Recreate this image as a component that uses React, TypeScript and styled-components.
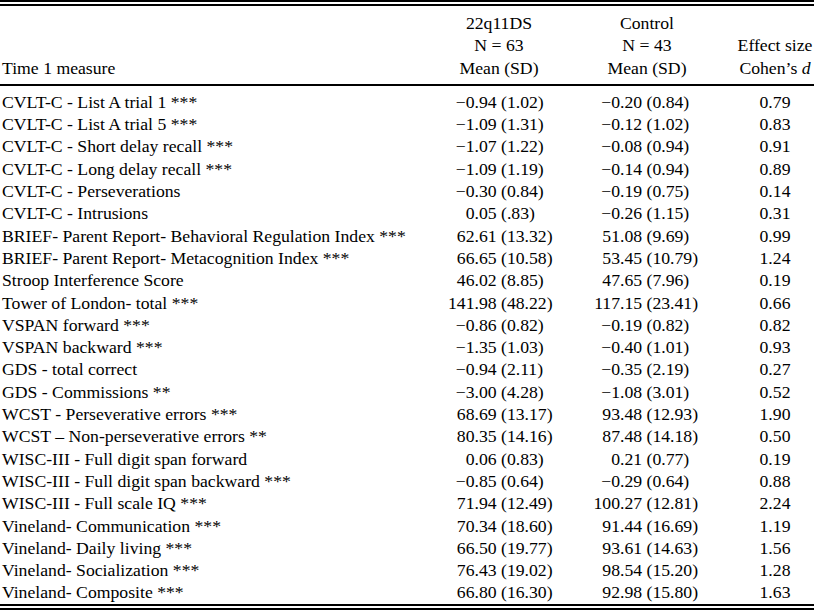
import React from 'react';
import styled, { createGlobalStyle } from 'styled-components';

type Row = {
  label: string;
  patient: string;
  control: string;
  effect: string;
};

const rows: Row[] = [
  { label: 'CVLT-C - List A trial 1 ***', patient: '−0.94 (1.02)', control: '−0.20 (0.84)', effect: '0.79' },
  { label: 'CVLT-C - List A trial 5 ***', patient: '−1.09 (1.31)', control: '−0.12 (1.02)', effect: '0.83' },
  { label: 'CVLT-C - Short delay recall ***', patient: '−1.07 (1.22)', control: '−0.08 (0.94)', effect: '0.91' },
  { label: 'CVLT-C - Long delay recall ***', patient: '−1.09 (1.19)', control: '−0.14 (0.94)', effect: '0.89' },
  { label: 'CVLT-C - Perseverations', patient: '−0.30 (0.84)', control: '−0.19 (0.75)', effect: '0.14' },
  { label: 'CVLT-C - Intrusions', patient: '0.05 (.83)', control: '−0.26 (1.15)', effect: '0.31' },
  { label: 'BRIEF- Parent Report- Behavioral Regulation Index ***', patient: '62.61 (13.32)', control: '51.08 (9.69)', effect: '0.99' },
  { label: 'BRIEF- Parent Report- Metacognition Index ***', patient: '66.65 (10.58)', control: '53.45 (10.79)', effect: '1.24' },
  { label: 'Stroop Interference Score', patient: '46.02 (8.85)', control: '47.65 (7.96)', effect: '0.19' },
  { label: 'Tower of London- total ***', patient: '141.98 (48.22)', control: '117.15 (23.41)', effect: '0.66' },
  { label: 'VSPAN forward ***', patient: '−0.86 (0.82)', control: '−0.19 (0.82)', effect: '0.82' },
  { label: 'VSPAN backward ***', patient: '−1.35 (1.03)', control: '−0.40 (1.01)', effect: '0.93' },
  { label: 'GDS - total correct', patient: '−0.94 (2.11)', control: '−0.35 (2.19)', effect: '0.27' },
  { label: 'GDS - Commissions **', patient: '−3.00 (4.28)', control: '−1.08 (3.01)', effect: '0.52' },
  { label: 'WCST - Perseverative errors ***', patient: '68.69 (13.17)', control: '93.48 (12.93)', effect: '1.90' },
  { label: 'WCST – Non-perseverative errors **', patient: '80.35 (14.16)', control: '87.48 (14.18)', effect: '0.50' },
  { label: 'WISC-III - Full digit span forward', patient: '0.06 (0.83)', control: '0.21 (0.77)', effect: '0.19' },
  { label: 'WISC-III - Full digit span backward ***', patient: '−0.85 (0.64)', control: '−0.29 (0.64)', effect: '0.88' },
  { label: 'WISC-III - Full scale IQ ***', patient: '71.94 (12.49)', control: '100.27 (12.81)', effect: '2.24' },
  { label: 'Vineland- Communication ***', patient: '70.34 (18.60)', control: '91.44 (16.69)', effect: '1.19' },
  { label: 'Vineland- Daily living ***', patient: '66.50 (19.77)', control: '93.61 (14.63)', effect: '1.56' },
  { label: 'Vineland- Socialization ***', patient: '76.43 (19.02)', control: '98.54 (15.20)', effect: '1.28' },
  { label: 'Vineland- Composite ***', patient: '66.80 (16.30)', control: '92.98 (15.80)', effect: '1.63' },
];

// split a value at its first decimal point so columns line up on it
function DecimalValue({ value, intWidth }: { value: string; intWidth: number }) {
  const dot = value.indexOf('.');
  return (
    <ValueCell>
      <IntPart $width={intWidth}>{value.slice(0, dot)}</IntPart>
      <FracPart>{value.slice(dot)}</FracPart>
    </ValueCell>
  );
}

export default function App() {
  return (
    <>
      <GlobalStyle />
      <Table>
        <DoubleRule />
        <Header>
          <HeadCell $align="left">Time 1 measure</HeadCell>
          <HeadCell $align="center">
            <span>22q11DS</span>
            <span>N = 63</span>
            <span>Mean (SD)</span>
          </HeadCell>
          <HeadCell $align="center">
            <span>Control</span>
            <span>N = 43</span>
            <span>Mean (SD)</span>
          </HeadCell>
          <HeadCell $align="center">
            <span>Effect size</span>
            <span>
              Cohen’s <i>d</i>
            </span>
          </HeadCell>
        </Header>
        <HeadRule />
        <Body>
          {rows.map((r) => (
            <DataRow key={r.label}>
              <Label>{r.label}</Label>
              <DecimalValue value={r.patient} intWidth={34.5} />
              <DecimalValue value={r.control} intWidth={62} />
              <Effect>{r.effect}</Effect>
            </DataRow>
          ))}
        </Body>
        <DoubleRule />
      </Table>
    </>
  );
}

const GlobalStyle = createGlobalStyle`
  body {
    margin: 0;
    background: #fff;
  }
`;

const Table = styled.div`
  width: 814px;
  font-family: 'Liberation Serif', 'Times New Roman', serif;
  font-size: 17.7px;
  line-height: 22.3px;
  color: #000;
`;

const DoubleRule = styled.div`
  height: 2px;
  border-top: 2px solid #000;
  border-bottom: 2px solid #000;
`;

const HeadRule = styled.div`
  height: 0;
  border-top: 2px solid #000;
`;

const columns = `440px 118px 178px 78px`;

const Header = styled.div`
  display: grid;
  grid-template-columns: ${columns};
  padding: 6px 0 5px;
`;

const HeadCell = styled.div<{ $align: 'left' | 'center' }>`
  display: flex;
  flex-direction: column;
  justify-content: flex-end;
  align-items: ${(p) => (p.$align === 'left' ? 'flex-start' : 'center')};
  padding-left: ${(p) => (p.$align === 'left' ? '2px' : '0')};
  white-space: nowrap;

  i {
    font-style: italic;
  }
`;

const Body = styled.div`
  padding: 5px 0 0;
`;

const DataRow = styled.div`
  display: grid;
  grid-template-columns: ${columns};
  height: 22.3px;
`;

const Label = styled.div`
  padding-left: 2px;
  white-space: nowrap;
`;

const ValueCell = styled.div`
  display: flex;
  white-space: nowrap;
`;

const IntPart = styled.span<{ $width: number }>`
  width: ${(p) => p.$width}px;
  flex: none;
  text-align: right;
`;

const FracPart = styled.span`
  flex: none;
`;

const Effect = styled.div`
  text-align: center;
`;
